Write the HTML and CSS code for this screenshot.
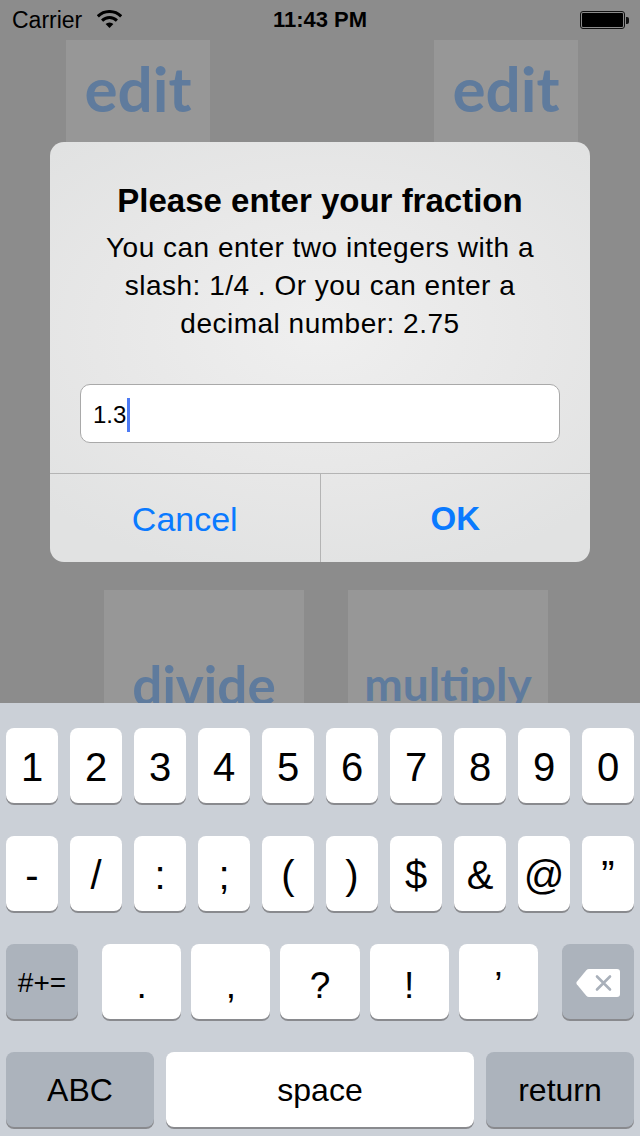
FILE: index.html
```html
<!DOCTYPE html>
<html>
<head>
<meta charset="utf-8">
<link rel="stylesheet" href="styles.css">
</head>
<body>
<div class="screen">
  <div class="statusbar">
    <div class="sb-left">
      <span class="carrier">Carrier</span>
      <svg class="wifi" width="25" height="18" viewBox="0 0 25 18">
        <path d="M0.83 6.33 A16.5 16.5 0 0 1 24.17 6.33" fill="none" stroke="#000" stroke-width="3"/>
        <path d="M5.08 10.58 A10.5 10.5 0 0 1 19.92 10.58" fill="none" stroke="#000" stroke-width="3"/>
        <path d="M12.5 18 L8.6 14.1 A5.5 5.5 0 0 1 16.4 14.1 Z" fill="#000"/>
      </svg>
    </div>
    <div class="sb-time">11:43 PM</div>
    <div class="sb-right">
      <div class="battery"><div class="battery-fill"></div></div>
      <div class="battery-nub"></div>
    </div>
  </div>

  <div class="content">
    <div class="tile-row top-row">
      <div class="tile tile-small"><span class="tile-label label-edit">edit</span></div>
      <div class="tile tile-small"><span class="tile-label label-edit">edit</span></div>
    </div>
    <div class="tile-row bottom-row">
      <div class="tile tile-big"><span class="tile-label label-divide">divide</span></div>
      <div class="tile tile-big"><span class="tile-label label-multiply">multiply</span></div>
    </div>

    <div class="alert">
      <div class="alert-body">
        <div class="alert-title">Please enter your fraction</div>
        <div class="alert-message">You can enter two integers with a<br>slash: 1/4 . Or you can enter a<br>decimal number: 2.75</div>
        <div class="alert-field"><span class="field-text">1.3</span><span class="caret"></span></div>
      </div>
      <div class="alert-buttons">
        <div class="alert-btn">Cancel</div>
        <div class="alert-btn alert-btn-bold">OK</div>
      </div>
    </div>
  </div>

  <div class="keyboard">
    <div class="krow">
      <div class="key">1</div><div class="key">2</div><div class="key">3</div><div class="key">4</div><div class="key">5</div>
      <div class="key">6</div><div class="key">7</div><div class="key">8</div><div class="key">9</div><div class="key">0</div>
    </div>
    <div class="krow">
      <div class="key">-</div><div class="key">/</div><div class="key">:</div><div class="key">;</div><div class="key">(</div>
      <div class="key">)</div><div class="key">$</div><div class="key">&amp;</div><div class="key">@</div><div class="key">”</div>
    </div>
    <div class="krow row3">
      <div class="key key-dark key-fn">#+=</div>
      <div class="mid-keys">
        <div class="key key-punct">.</div>
        <div class="key key-punct">,</div>
        <div class="key key-punct">?</div>
        <div class="key key-punct">!</div>
        <div class="key key-punct">’</div>
      </div>
      <div class="key key-dark key-fn">
        <svg width="46" height="32" viewBox="0 0 46 32">
          <path d="M14 2 H42 Q45 2 45 5 V27 Q45 30 42 30 H14 Q12.5 30 11.3 28.8 L1.8 17.3 Q0.8 16 1.8 14.7 L11.3 3.2 Q12.5 2 14 2 Z" fill="#fff"/>
          <path d="M22 9.5 L35 22.5 M35 9.5 L22 22.5" stroke="#a9b0ba" stroke-width="2.6" stroke-linecap="round"/>
        </svg>
      </div>
    </div>
    <div class="krow row4">
      <div class="key key-dark key-wide">ABC</div>
      <div class="key key-space">space</div>
      <div class="key key-dark key-wide">return</div>
    </div>
  </div>
</div>
</body>
</html>
```

FILE: styles.css
```css
* { box-sizing: border-box; }

html, body {
  margin: 0;
  padding: 0;
}

body {
  width: 640px;
  height: 1136px;
  overflow: hidden;
  font-family: "Liberation Sans", Arial, sans-serif;
  background: #8c8c8c;
}

.screen {
  width: 640px;
  height: 1136px;
  display: flex;
  flex-direction: column;
  background: #8c8c8c;
}

/* status bar */
.statusbar {
  height: 40px;
  display: grid;
  grid-template-columns: 1fr auto 1fr;
  align-items: center;
  color: #000;
  flex: none;
}

.sb-left {
  display: flex;
  align-items: center;
  padding-left: 12px;
  gap: 15px;
}

.carrier {
  font-size: 23px;
  line-height: 40px;
}

.wifi {
  display: block;
  margin-top: -2px;
}

.sb-time {
  font-size: 22px;
  font-weight: bold;
  line-height: 40px;
}

.sb-right {
  display: flex;
  align-items: center;
  justify-content: flex-end;
  padding-right: 11px;
}

.battery {
  width: 45px;
  height: 18px;
  border: 1px solid #111;
  border-radius: 3px;
  padding: 1px;
}

.battery-fill {
  width: 100%;
  height: 100%;
  background: #000;
  border-radius: 1px;
}

.battery-nub {
  width: 3px;
  height: 7px;
  background: #111;
  border-radius: 0 2px 2px 0;
  margin-left: 1px;
}

/* content */
.content {
  position: relative;
  height: 663px;
  flex: none;
  overflow: hidden;
}

.tile-row {
  display: flex;
}

.top-row {
  padding-left: 66px;
  gap: 224px;
}

.bottom-row {
  padding-left: 104px;
  gap: 44px;
  margin-top: 406px;
}

.tile {
  background: #979797;
  display: flex;
  justify-content: center;
}

.tile-small {
  width: 144px;
  height: 144px;
}

.tile-big {
  width: 200px;
  height: 200px;
}

.tile-label {
  font-family: Lato, "Open Sans", sans-serif;
  font-weight: 700;
  color: #5f7b9d;
}

.label-edit {
  font-size: 62px;
  line-height: 62px;
  padding-top: 17px;
}

.label-divide {
  font-size: 53px;
  line-height: 53px;
  padding-top: 68px;
}

.label-multiply {
  font-size: 46px;
  line-height: 46px;
  padding-top: 71px;
}

/* alert */
.alert {
  position: absolute;
  left: 50px;
  top: 102px;
  width: 540px;
  height: 420px;
  border-radius: 14px;
  overflow: hidden;
  background: radial-gradient(ellipse 70% 60% at 50% 45%, #efefef 0%, #e7e7e7 60%, #e1e2e2 100%);
  display: flex;
  flex-direction: column;
  color: #000;
}

.alert-body {
  padding: 39px 30px 30px;
  display: flex;
  flex-direction: column;
  align-items: stretch;
  text-align: center;
}

.alert-title {
  font-size: 33px;
  font-weight: bold;
  line-height: 40px;
}

.alert-message {
  font-size: 28px;
  letter-spacing: 0.5px;
  line-height: 38px;
  margin-top: 8px;
}

.alert-field {
  margin-top: 41px;
  height: 59px;
  background: #fff;
  border: 1px solid #a9a9a9;
  border-radius: 10px;
  display: flex;
  align-items: center;
  padding-left: 12px;
  text-align: left;
}

.field-text {
  font-size: 24px;
  line-height: 30px;
  margin-top: 2px;
}

.caret {
  width: 3px;
  height: 34px;
  background: #4e7bf4;
  margin-left: 1px;
  margin-top: 2px;
}

.alert-buttons {
  display: flex;
  border-top: 1px solid #b4b4b4;
  flex: 1;
}

.alert-btn {
  flex: 1;
  display: flex;
  align-items: center;
  justify-content: center;
  font-size: 34px;
  color: #0a7aff;
  padding-top: 2px;
}

.alert-btn + .alert-btn {
  border-left: 1px solid #b4b4b4;
}

.alert-btn-bold {
  font-weight: bold;
  font-size: 33px;
}

/* keyboard */
.keyboard {
  flex: 1;
  background: #cbd0d7;
  padding: 25px 6px 9px;
  display: flex;
  flex-direction: column;
  gap: 33px;
}

.krow {
  display: flex;
  gap: 12px;
  height: 75px;
}

.key {
  width: 52px;
  height: 75px;
  background: #fff;
  border-radius: 8px;
  box-shadow: 0 2px 0 #898a8e;
  display: flex;
  align-items: center;
  justify-content: center;
  font-size: 40px;
  color: #000;
  padding-top: 3px;
}

.row3 {
  gap: 24px;
}

.mid-keys {
  display: flex;
  gap: 10px;
  flex: 1;
}

.key-punct {
  flex: 1;
  width: auto;
  font-size: 37px;
  padding-top: 8px;
}

.key-dark {
  background: #acb3bc;
}

.key-fn {
  width: 72px;
  font-size: 28px;
  padding-top: 2px;
}

.key-wide {
  width: 148px;
  font-size: 32px;
  padding-top: 2px;
}

.key-space {
  flex: 1;
  width: auto;
  font-size: 32px;
  padding-top: 2px;
}
```
